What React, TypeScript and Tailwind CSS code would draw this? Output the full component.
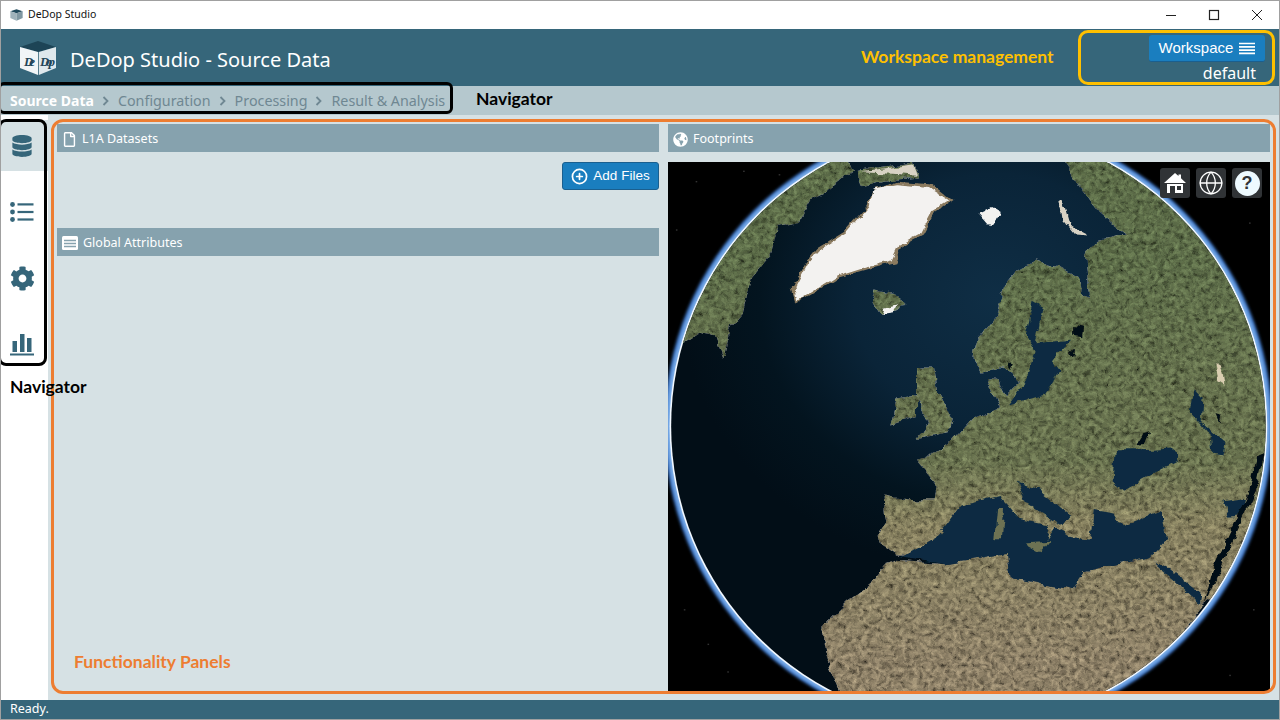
import { FaDatabase, FaCog, FaGlobeAmericas, FaRegFile } from "react-icons/fa";
import { CirclePlus, Globe } from "lucide-react";

const crumbs = ["Configuration", "Processing", "Result & Analysis"];

function Chevron() {
  return (
    <svg width="8" height="10" viewBox="0 0 8 10" className="mx-[8px] mt-[1px]">
      <path d="M1.5 1 L5.5 5 L1.5 9" fill="none" stroke="#6f8792" strokeWidth="1.8" />
    </svg>
  );
}

function Logo() {
  return (
    <svg width="38" height="34" viewBox="0 0 38 34">
      <path d="M1 6 L19 0 L37 6 L19 11 Z" fill="#1d4456" />
      <path d="M1 6 L19 11 L19 34 L1 27 Z" fill="#f1f5f7" />
      <path d="M19.8 11 L37 6 L37 27 L19.8 34 Z" fill="#dfe8ec" />
      <text x="5" y="25" fontSize="13" fontStyle="italic" fontWeight="700" fill="#1f4659" fontFamily="Liberation Serif, serif" textLength="11">De</text>
      <text x="21" y="25" fontSize="13" fontStyle="italic" fontWeight="700" fill="#1f4659" fontFamily="Liberation Serif, serif" textLength="15">Dop</text>
    </svg>
  );
}

function ListIcon() {
  return (
    <svg width="24" height="20" viewBox="0 0 24 20" fill="#36667a">
      <circle cx="2.5" cy="2.5" r="2.4" />
      <circle cx="2.5" cy="10" r="2.4" />
      <circle cx="2.5" cy="17.5" r="2.4" />
      <rect x="7.5" y="1.3" width="16" height="2.2" />
      <rect x="7.5" y="8.9" width="16" height="2.2" />
      <rect x="7.5" y="16.4" width="16" height="2.2" />
    </svg>
  );
}

function ChartIcon() {
  return (
    <svg width="24" height="24" viewBox="0 0 24 24" fill="#36667a">
      <rect x="2.5" y="9" width="4.5" height="11" />
      <rect x="10" y="2" width="4.5" height="18" />
      <rect x="17" y="6" width="4.5" height="14" />
      <rect x="0" y="21.5" width="24" height="2" />
    </svg>
  );
}

function ListBoxIcon() {
  return (
    <svg width="16" height="14" viewBox="0 0 16 14">
      <rect x="0" y="0" width="16" height="14" rx="1.5" fill="#fff" />
      <path d="M2 4.5 H14 M2 7.5 H14 M2 10.5 H14" stroke="#86a2ae" strokeWidth="1.4" />
    </svg>
  );
}

function HomeIcon() {
  return (
    <svg width="22" height="22" viewBox="0 0 22 22" fill="#fff">
      <path d="M11 1 L14.5 4 V2.5 H17 V6.2 L22 11 H0 Z" />
      <path fillRule="evenodd" d="M3 12 H19 V21 H3 Z M6 14 V21 H11 V14 Z M13 14 V18 H17 V14 Z" />
    </svg>
  );
}

function HelpIcon() {
  return (
    <div className="flex h-[25px] w-[25px] items-center justify-center rounded-full bg-[#eefaff] font-['Liberation_Sans',sans-serif] text-[18px] font-bold leading-none text-[#303336]">
      ?
    </div>
  );
}

function PanelHead({ icon, title }: { icon: React.ReactNode; title: string }) {
  return (
    <div className="flex h-7 items-center gap-[5px] bg-[#86a2ae] pl-[5px] pt-[2px] text-[12.5px] text-white">
      {icon}
      <span>{title}</span>
    </div>
  );
}

function MapButton({ children }: { children: React.ReactNode }) {
  return (
    <div className="flex h-[30px] w-[30px] items-center justify-center rounded-[3px] bg-[#303336] text-white">
      {children}
    </div>
  );
}

function EarthMap() {
  return (
    <svg viewBox="20 5 1523 1535" preserveAspectRatio="none" className="block h-full w-full">
      <defs>
        <radialGradient id="ocean" gradientUnits="userSpaceOnUse" cx="850" cy="400" r="800">
          <stop offset="0" stopColor="#0f2e45" />
          <stop offset="0.45" stopColor="#0a2438" />
          <stop offset="0.75" stopColor="#03141f" />
          <stop offset="1" stopColor="#020e17" />
        </radialGradient>
        <linearGradient id="land" gradientUnits="userSpaceOnUse" x1="0" y1="300" x2="0" y2="1450">
          <stop offset="0" stopColor="#5c6c48" />
          <stop offset="0.5" stopColor="#68714e" />
          <stop offset="0.66" stopColor="#857f5e" />
          <stop offset="1" stopColor="#8c7f66" />
        </linearGradient>
        <filter id="rough" filterUnits="userSpaceOnUse" x="0" y="0" width="1600" height="1600">
          <feTurbulence type="fractalNoise" baseFrequency="0.08 0.07" numOctaves="4" seed="7" result="noise" />
          <feColorMatrix in="noise" values="1.1 0 0 0 -0.05  1.1 0 0 0 -0.05  1.1 0 0 0 -0.05  0 0 0 0 1" result="gray" />
          <feBlend in="gray" in2="SourceGraphic" mode="overlay" result="blend" />
          <feComposite in="blend" in2="SourceAlpha" operator="in" />
        </filter>
        <filter id="coast" filterUnits="userSpaceOnUse" x="0" y="0" width="1600" height="1600">
          <feTurbulence type="fractalNoise" baseFrequency="0.028" numOctaves="4" seed="3" result="warp" />
          <feDisplacementMap in="SourceGraphic" in2="warp" scale="22" xChannelSelector="R" yChannelSelector="G" />
        </filter>
        <filter id="halo" filterUnits="userSpaceOnUse" x="0" y="0" width="1600" height="1700">
          <feGaussianBlur stdDeviation="4" />
        </filter>
        <clipPath id="disc">
          <ellipse cx="780" cy="770" rx="752" ry="863" />
        </clipPath>
      </defs>
      <rect x="20" y="5" width="1523" height="1535" fill="#000" />
      {[[90, 60], [210, 30], [60, 1300], [170, 1480], [1500, 1300], [1440, 1490], [300, 40], [40, 200], [1490, 180], [120, 1400]].map(([x, y]) => (
        <rect key={x} x={x} y={y} width="4" height="4" fill="#333" />
      ))}
      <ellipse cx="780" cy="770" rx="769" ry="882" fill="#3f78c8" filter="url(#halo)" />
      <ellipse cx="780" cy="770" rx="762" ry="875" fill="#7fb0ea" filter="url(#halo)" />
      <ellipse cx="780" cy="770" rx="756" ry="868" fill="#f2f8ff" />
      <ellipse cx="780" cy="770" rx="752" ry="863" fill="url(#ocean)" />
      <g clipPath="url(#disc)">
        <g filter="url(#coast)">
          <g filter="url(#rough)" fill="url(#land)">
            {/* Canada and arctic islands */}
            <path d="M400,-30 L470,-30 L490,30 L430,85 L385,110 L350,180 L300,190 L280,270 L230,340 L210,440 L180,480 L160,575 L140,510 L100,500 L60,530 L0,560 L20,400 L120,250 L280,60 Z" />
            <path d="M500,30 L640,10 L655,50 L560,60 L510,75 Z" />
            {/* Europe and Asia */}
            <path d="M600,1145 L555,1110 L550,1085 L570,1040 L565,970 L640,985 L690,985 L695,930 L650,870 L700,845 L735,820 L790,750 L860,715 L840,680 L830,635 L855,635 L875,680 L910,640 L870,600 L815,615 L790,570 L800,520 L850,450 L870,370 L910,310 L950,290 L1010,310 L1060,340 L1065,390 L1085,400 L1080,330 L1075,270 L1110,230 L1180,215 L1110,150 L1000,-30 L1200,-30 L1400,150 L1560,500 L1590,840 L1560,1000 L1430,1240 L1375,1285 L1250,1160 Z" />
            {/* Africa */}
            <path d="M600,1160 L720,1170 L880,1140 L890,1210 L1050,1245 L1070,1190 L1240,1150 L1380,1290 L1150,1600 L480,1600 L420,1440 L408,1350 L470,1280 L530,1230 L570,1170 Z" />
            {/* UK, Ireland, Iceland */}
            <path d="M650,600 L690,600 L700,660 L740,750 L730,790 L650,810 L680,760 L650,690 Z" />
            <path d="M600,690 L650,680 L650,740 L585,765 L595,720 Z" />
            <path d="M545,380 L590,390 L618,410 L600,435 L555,445 L535,410 Z" />
          </g>
          {/* inland and enclosed seas */}
          <g fill="#0e2c42">
            <path d="M610,1150 L700,1090 L760,1000 L860,975 L905,1035 L985,1055 L975,1100 L1000,1060 L1040,1090 L1090,1100 L1100,1010 L1150,1020 L1170,1060 L1270,1015 L1280,1100 L1240,1150 L1070,1190 L1050,1245 L890,1210 L880,1140 L720,1170 Z" />
            <path d="M905,935 L960,955 L1040,1030 L1020,1060 L925,990 Z" />
            <path d="M1150,840 L1220,840 L1300,835 L1310,870 L1240,910 L1170,955 L1145,930 Z" />
            <path d="M1350,660 L1375,690 L1370,760 L1430,820 L1425,855 L1395,850 L1390,790 L1340,730 Z" />
            <path d="M925,505 L945,410 L968,425 L950,530 L1040,520 L990,580 L1010,610 L970,680 L880,710 L920,650 L950,560 Z" />
            <path d="M1250,1165 L1280,1175 L1370,1255 L1365,1285 Z" />
            <path d="M1425,985 L1480,975 L1470,1030 L1440,1035 Z" />
          </g>
          <g fill="#030c12">
            <path d="M1045,480 L1070,485 L1068,510 L1045,505 Z" />
            <path d="M1035,550 L1050,550 L1045,575 Z" />
            <path d="M880,580 L895,585 L885,605 Z" />
            <path d="M1405,735 L1420,740 L1415,760 Z" />
            <path d="M1222,790 L1240,785 L1225,825 L1205,825 Z" />
            <path d="M1510,860 L1530,850 L1510,950 L1490,1000 L1375,1285 L1400,1180 L1490,960 Z" />
          </g>
          <g fill="#6d7253">
            <path d="M855,1010 L870,1010 L865,1095 L848,1095 Z" />
            <path d="M925,1110 L985,1105 L965,1135 Z" />
          </g>
          {/* ice and snow */}
          <path d="M540,85 L600,62 L690,70 L740,115 L695,150 L665,215 L615,245 L595,295 L525,315 L450,340 L390,385 L345,415 L333,370 L365,300 L395,258 L465,208 L525,130 Z" fill="#8a7a5f" />
          <path d="M540,85 L600,72 L680,80 L730,115 L688,145 L658,210 L608,240 L588,290 L520,308 L450,333 L390,378 L347,408 L340,370 L372,300 L402,262 L470,212 L530,132 Z" fill="#f3f2f0" />
          <path d="M805,155 L840,135 L862,150 L835,195 Z" fill="#f3f2f0" />
          <path d="M1010,110 L1020,110 L1040,190 L1085,218 L1050,215 L1018,170 Z" fill="#d8d2c4" />
          <path d="M565,430 L600,420 L590,440 L560,445 Z" fill="#f3f2f0" />
          <path d="M1405,590 L1420,600 L1428,650 L1412,640 Z" fill="#d9cdb0" />
          <path d="M510,35 L640,15 L650,45 L600,40 Z" fill="#d8d2c4" />
        </g>
      </g>
    </svg>
  );
}

export default function App() {
  return (
    <div className="relative flex h-[720px] w-[1280px] flex-col overflow-hidden border border-[#a0a0a0] bg-white font-['Noto_Sans',sans-serif]">
      <div className="flex h-[28px] shrink-0 items-center justify-between bg-white">
        <div className="flex items-center gap-[5px] pl-[9px] text-[10.5px] text-[#111]">
          <svg width="13" height="12" viewBox="0 0 38 34">
            <path d="M1 6 L19 0 L37 6 L19 12 Z" fill="#20495c" />
            <path d="M1 6 L19 12 L19 34 L1 26 Z" fill="#9fb2bb" />
            <path d="M19 12 L37 6 L37 26 L19 34 Z" fill="#7f97a2" />
          </svg>
          <span>DeDop Studio</span>
        </div>
        <div className="flex items-center gap-[31px] pr-[16px]">
          <svg width="12" height="12" viewBox="0 0 12 12"><path d="M1 6.5 H11" stroke="#222" strokeWidth="1" /></svg>
          <svg width="12" height="12" viewBox="0 0 12 12"><rect x="1.5" y="1.5" width="9" height="9" fill="none" stroke="#222" strokeWidth="1.2" /></svg>
          <svg width="12" height="12" viewBox="0 0 12 12"><path d="M1 1 L11 11 M11 1 L1 11" stroke="#222" strokeWidth="1" /></svg>
        </div>
      </div>

      <header className="flex h-[57px] shrink-0 items-center justify-between bg-[#36667a] pl-[18px] pr-[14px]">
        <div className="flex items-center gap-[13px] pt-[1px]">
          <Logo />
          <span className="pt-[3px] text-[20px] text-white">DeDop Studio - Source Data</span>
        </div>
        <div className="flex flex-col items-end">
          <button className="mt-[4px] flex h-[27px] w-[116px] items-center justify-center gap-[6px] rounded-[3px] border-b border-[#1a5f8f] bg-[#1a7ebf] font-['Liberation_Sans',sans-serif] text-[15px] text-white">
            Workspace
            <svg width="16" height="13" viewBox="0 0 16 13"><path d="M0 1.5 H16 M0 4.8 H16 M0 8.1 H16 M0 11.4 H16" stroke="#fff" strokeWidth="1.7" /></svg>
          </button>
          <span className="mr-[9px] text-[16px] leading-[22px] text-white">default</span>
        </div>
      </header>

      <nav className="flex h-[29px] shrink-0 items-center bg-[#b5c8ce] pl-[9px] text-[14.3px] text-[#6f8792]">
        <span className="text-[14px] font-bold text-white">Source Data</span>
        {crumbs.map((c) => (
          <span key={c} className="flex items-center">
            <Chevron />
            {c}
          </span>
        ))}
      </nav>

      <div className="flex min-h-0 flex-1">
        <aside className="flex w-[47px] shrink-0 flex-col bg-white pt-[5px] text-[#36667a]">
          <div className="flex h-[51px] items-center justify-center bg-[#d6e1e4] pr-[5px]"><FaDatabase size={22} /></div>
          <div className="flex h-[66px] items-center justify-center pr-[5px] pt-[16px]"><ListIcon /></div>
          <div className="flex h-[66px] items-center justify-center pr-[5px] pt-[16px]"><FaCog size={25} /></div>
          <div className="flex h-[66px] items-center justify-center pr-[5px] pt-[16px]"><ChartIcon /></div>
        </aside>

        <main className="flex flex-1 gap-[9px] bg-[#d6e1e4] pb-[8px] pl-[9px] pr-[9px] pt-[9px]">
          <section className="flex w-[602px] flex-col">
            <PanelHead icon={<FaRegFile size={15} />} title="L1A Datasets" />
            <div className="flex h-[76px] items-start justify-end pt-[10px]">
              <button className="flex h-[28px] w-[97px] items-center justify-center gap-[5px] rounded-[3px] border border-[#1a5f8f] bg-[#1a7ebf] font-['Liberation_Sans',sans-serif] text-[13.5px] text-white">
                <CirclePlus size={17} strokeWidth={2.4} />
                Add Files
              </button>
            </div>
            <PanelHead icon={<ListBoxIcon />} title="Global Attributes" />
          </section>
          <section className="flex min-w-0 flex-1 flex-col">
            <PanelHead icon={<FaGlobeAmericas size={15} />} title="Footprints" />
            <div className="relative mt-[10px] min-h-0 flex-1 overflow-hidden">
              <EarthMap />
              <div className="absolute right-[8px] top-[6px] flex gap-[6px]">
                <MapButton><HomeIcon /></MapButton>
                <MapButton><Globe size={26} strokeWidth={1.2} /></MapButton>
                <MapButton><HelpIcon /></MapButton>
              </div>
            </div>
          </section>
        </main>
      </div>

      <footer className="flex h-[19px] shrink-0 items-center bg-[#36667a] pl-[9px] text-[12.5px] text-white">Ready.</footer>

      {/* annotation overlays */}
      <div className="absolute left-[-3px] top-[81px] h-[32px] w-[455px] rounded-[6px] border-[3px] border-black" />
      <div className="absolute left-[-3px] top-[118px] h-[247px] w-[49px] rounded-[8px] border-[3px] border-black" />
      <div className="absolute left-[50px] top-[118px] h-[575px] w-[1225px] rounded-[12px] border-[3px] border-[#ed7d31]" />
      <div className="absolute left-[1077px] top-[29px] h-[55px] w-[197px] rounded-[10px] border-[3px] border-[#ffc000]" />
      <span className="absolute left-[475px] top-[85px] font-['Lato',sans-serif] text-[17.5px] font-bold text-black">Navigator</span>
      <span className="absolute left-[9px] top-[373px] font-['Lato',sans-serif] text-[17.5px] font-bold text-black">Navigator</span>
      <span className="absolute left-[860px] top-[43px] font-['Lato',sans-serif] text-[17.5px] font-bold text-[#ffc000]">Workspace management</span>
      <span className="absolute left-[73px] top-[648px] font-['Lato',sans-serif] text-[17.5px] font-bold text-[#ed7d31]">Functionality Panels</span>
    </div>
  );
}
